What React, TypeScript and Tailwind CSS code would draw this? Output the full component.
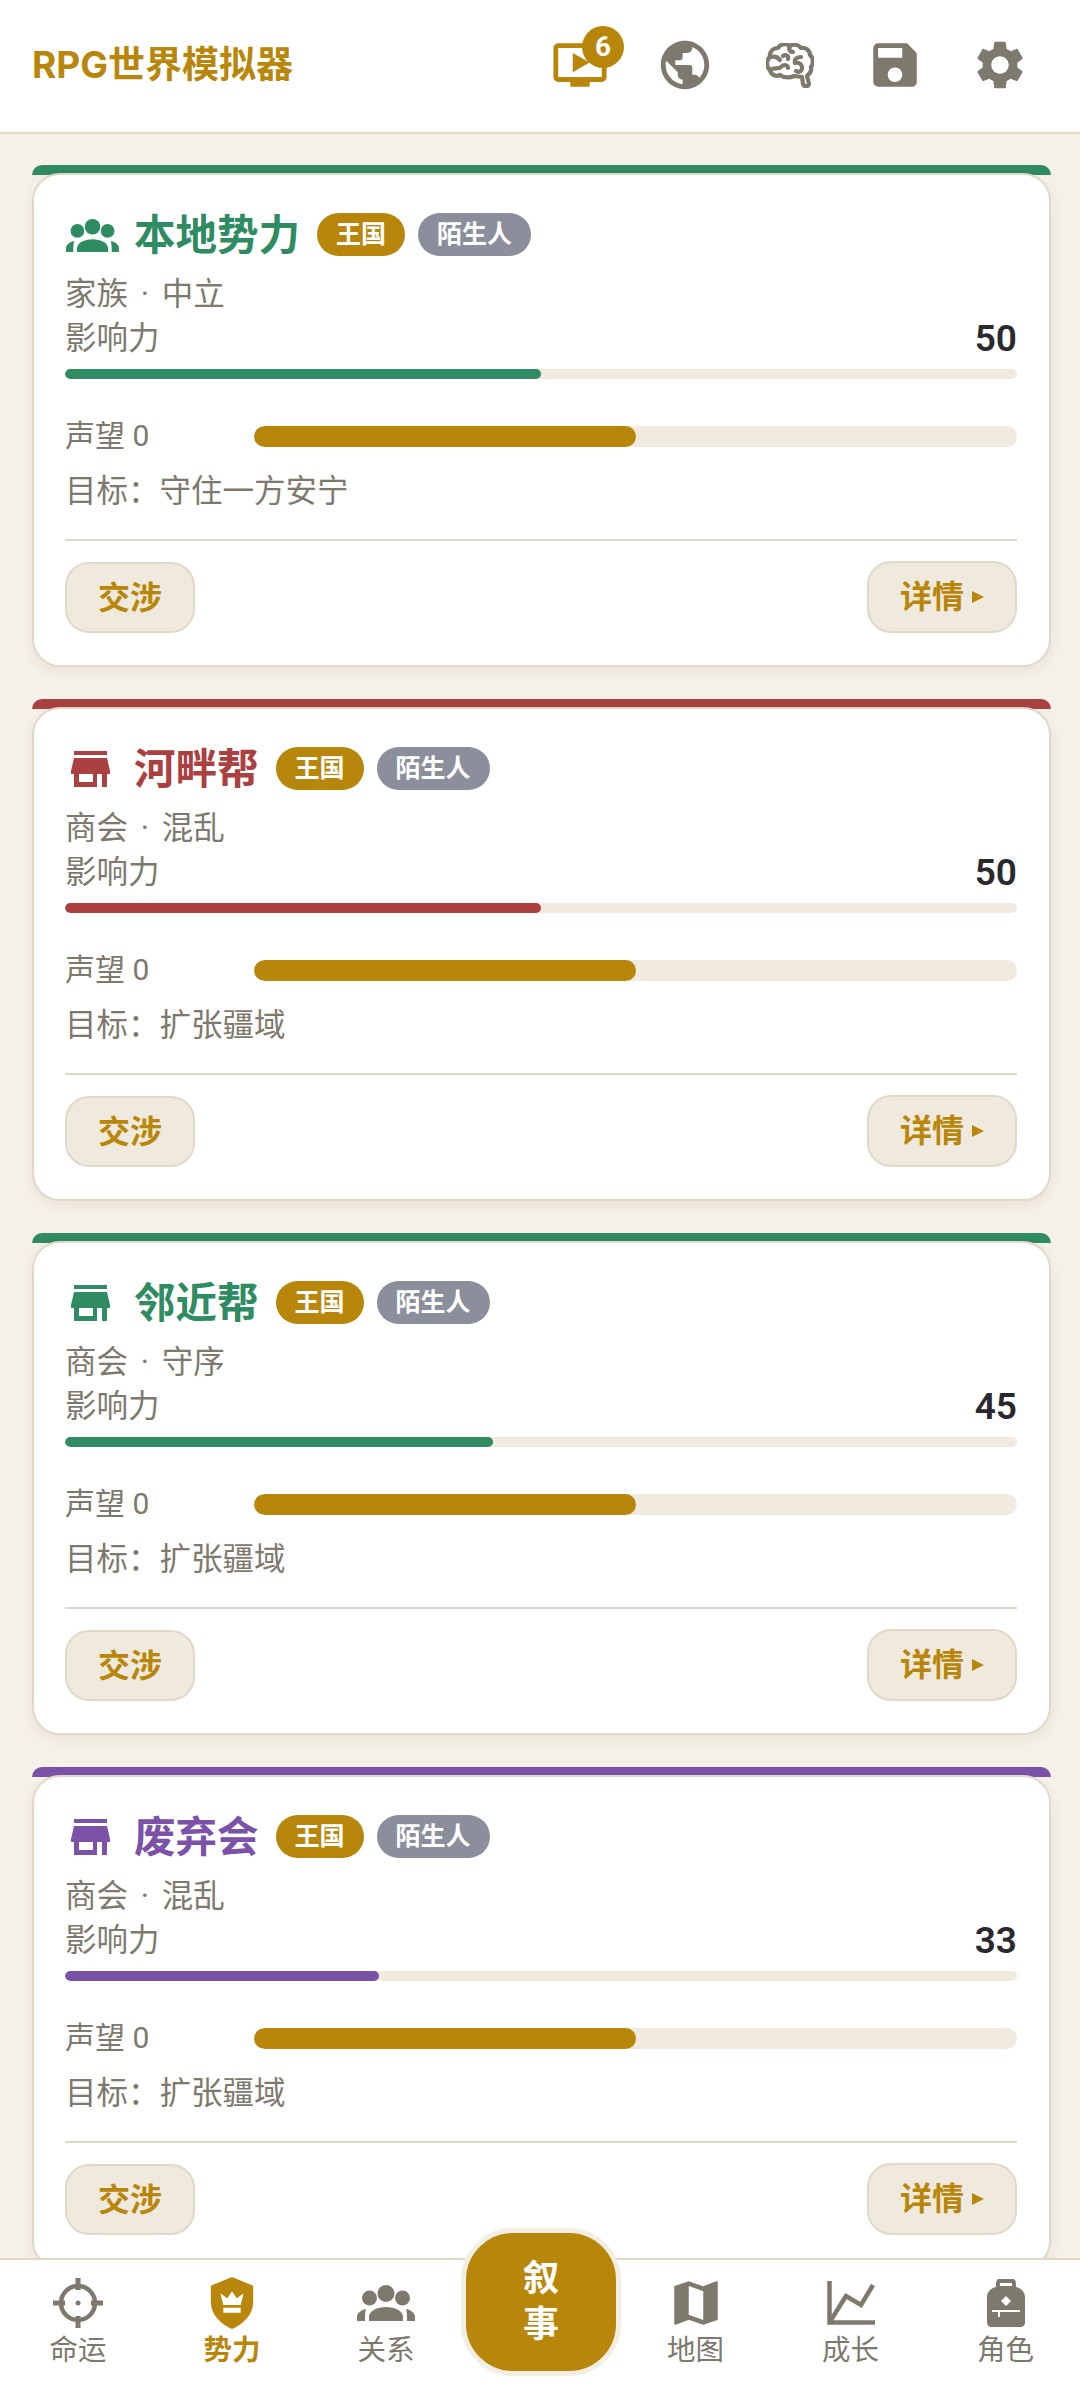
import React from "react";
import { MdMap, MdOutlineOndemandVideo, MdPublic, MdSave, MdSettings } from "react-icons/md";

const FONT = 'Roboto, "Noto Sans CJK SC", sans-serif';
const cards = [
  { name: "本地势力", color: "#2e8b62", icon: "g", sub: "家族 · 中立", inf: 50, goal: "守住一方安宁" },
  { name: "河畔帮", color: "#ab4040", icon: "s", sub: "商会 · 混乱", inf: 50, goal: "扩张疆域" },
  { name: "邻近帮", color: "#2e8b62", icon: "s", sub: "商会 · 守序", inf: 45, goal: "扩张疆域" },
  { name: "废弃会", color: "#7b52a8", icon: "s", sub: "商会 · 混乱", inf: 33, goal: "扩张疆域" },
];

const Groups = ({ w, h }: { w: number; h: number }) => (
  <svg width={w} height={h} viewBox="0 0 58 36" fill="currentColor">
    <circle cx="29" cy="8.5" r="8.5" />
    <circle cx="12.5" cy="13" r="7.5" />
    <circle cx="45.5" cy="13" r="7.5" />
    <path d="M12 36V32C12 26 20 22 29 22S46 26 46 32V36Z" />
    <path d="M0 36V32C0 28 4 25 9 24C8 27 8 31 8 36Z" />
    <path d="M58 36V32C58 28 54 25 49 24C50 27 50 31 50 36Z" />
  </svg>
);

const Store = () => (
  <svg width="39" height="36" viewBox="0 0 39 36" fill="currentColor">
    <path d="M3 0H36V4H3Z" />
    <path d="M3 7H36L39 20V23H0V20Z" />
    <path d="M3 23H8V31H22V23H26V36H3Z" />
    <path d="M31 23H36V36H31Z" />
  </svg>
);

function FactionCard({ c }: { c: (typeof cards)[number] }) {
  return (
    <div className="relative shrink-0 pt-[8px]">
      <div className="absolute left-0 right-0 top-0 h-[10px] rounded-t-[10px]" style={{ backgroundColor: c.color }} />
      <div className="relative h-[494px] rounded-[28px] border-2 border-[#e0d9c8] bg-white pl-[31px] pr-[32px] pt-[36px] shadow-[0_4px_12px_rgba(90,70,30,0.08)]">
        <div className="flex h-[46px] items-center">
          <span className="flex w-[54px] justify-center" style={{ color: c.color }}>
            {c.icon === "g" ? <span className="mt-[3px]"><Groups w={53} h={33} /></span> : <span className="mr-[4px] mt-[1px]"><Store /></span>}
          </span>
          <span className="ml-[15px] pt-[3px] text-[41.5px] leading-none font-bold" style={{ color: c.color }}>{c.name}</span>
          <span className="ml-[17px] flex h-[43px] items-center rounded-full bg-[#b8860b] px-[19px] pt-[1px] text-[25px] font-bold text-white">王国</span>
          <span className="ml-[13px] flex h-[43px] items-center rounded-full bg-[#8b8f9c] px-[19px] pt-[1px] text-[25px] font-bold text-white">陌生人</span>
        </div>
        <div className="mt-[16px] h-[43px] text-[31.5px] leading-[43px] text-[#7d7a6d] [word-spacing:5px]">{c.sub}</div>
        <div className="mt-[1px] flex h-[43px] items-center justify-between text-[31.5px] leading-[43px] text-[#7d7a6d]">
          <span>影响力</span>
          <span className="text-[37px] font-semibold text-[#2a2a2e]">{c.inf}</span>
        </div>
        <div className="mt-[9px] h-[10px] overflow-hidden rounded-full bg-[#f0eadf]">
          <div className="h-full rounded-full" style={{ width: `${c.inf}%`, backgroundColor: c.color }} />
        </div>
        <div className="mt-[46px] flex h-[22px] items-center">
          <span className="w-[189px] text-[30px] leading-none text-[#7d7a6d]">声望 0</span>
          <div className="h-[21px] flex-1 overflow-hidden rounded-full bg-[#f0eadf]">
            <div className="h-full w-1/2 rounded-full bg-[#b8860b]" />
          </div>
        </div>
        <div className="mt-[23px] h-[43px] text-[31.5px] leading-[43px] text-[#7d7a6d]">目标：{c.goal}</div>
        <div className="mt-[26px] h-[2px] bg-[#dfd9c9]" />
        <div className="mt-[20px] flex items-end justify-between">
          <button className="h-[71px] w-[130px] rounded-[24px] border-2 border-[#e0d9c8] bg-[#f0e9dd] text-[32px] font-bold text-[#b8860b]">交涉</button>
          <button className="flex h-[72px] w-[150px] items-center justify-center gap-[8px] rounded-[24px] border-2 border-[#e0d9c8] bg-[#f0e9dd] text-[32px] font-bold text-[#b8860b]">
            详情
            <svg width="12" height="14" viewBox="0 0 12 14"><path d="M0 1 L12 7 L0 13 Z" fill="#b8860b" /></svg>
          </button>
        </div>
      </div>
    </div>
  );
}

const Crosshair = () => (
  <svg width="50" height="50" viewBox="0 0 50 50" fill="none" stroke="#7d7a6d">
    <circle cx="25" cy="25" r="17" strokeWidth="4.5" />
    <path d="M25 0v12M25 38v12M0 25h12M38 25h12" strokeWidth="5" />
    <circle cx="25" cy="25" r="2.5" fill="#7d7a6d" stroke="none" />
  </svg>
);
const Shield = () => (
  <svg width="44" height="52" viewBox="0 0 44 54">
    <path d="M22 0 L44 9 V26 C44 39 34 49 22 54 C10 49 0 39 0 26 V9 Z" fill="#b8860b" />
    <path d="M10 17 L17 22 L22 15 L27 22 L34 17 L31 29 H13 Z M13 32 H31 V37 H13 Z" fill="#fff" />
  </svg>
);
const Chart = () => (
  <svg width="48" height="44" viewBox="0 0 48 44" fill="none" stroke="#7d7a6d" strokeWidth="4.5">
    <path d="M2.5 0V41.5H48" />
    <path d="M4 39 L19 15 L34 24 L46 4" />
  </svg>
);
const Backpack = () => (
  <svg width="38" height="48" viewBox="0 0 38 48" fill="#7d7a6d">
    <path fillRule="evenodd" d="M12 0H26C28 0 29 2 29 5V8C34 9 38 13 38 18V44C38 46 36 48 34 48H4C2 48 0 46 0 44V18C0 13 4 9 9 8V5C9 2 10 0 12 0ZM13 4V7H25V4Z" />
    <path d="M19 17L24 22L19 27L14 22Z" fill="#fff" />
    <path d="M5 31H33V33H13V38H11V33H5Z" fill="#fff" />
  </svg>
);
const Brain = () => (
  <span className="flex w-[58px] justify-center">
    <svg width="48" height="45" viewBox="0 0 48 45" fill="none" stroke="#7d7a6d" strokeWidth="4.2" strokeLinecap="round" strokeLinejoin="round">
      <path d="M24 3C20 0 14 1 12 5C7 5 3 9 4 14C0 17 0 24 4 27C5 32 10 34 14 32C18 35 24 35 28 33L36 34L37 41C38 44 42 44 43 41L41 33C44 30 46 28 45 24C48 20 47 14 44 12C44 7 39 4 35 5C32 1 27 1 24 3Z" />
      <path d="M24 3C22 6 24 9 27 9M4 14C8 13 12 14 14 17M6 26C10 25 13 26 15 24C18 21 22 22 22 25M35 14C31 14 28 16 29 20C33 19 36 21 36 25C36 28 33 30 30 28M17 13C20 11 23 13 22 16" />
    </svg>
  </span>
);

function NavItem({ label, icon, active, wide }: { label: string; icon: React.ReactNode; active?: boolean; wide?: boolean }) {
  return (
    <div className={`flex shrink-0 flex-col items-center ${wide ? "w-[155px]" : "w-[154px]"} ${active ? "text-[#b8860b] font-bold" : "text-[#7d7a6d]"}`}>
      <div className="flex h-[58px] items-center justify-center">{icon}</div>
      <span className="-mt-[1px] text-[28.5px] leading-[40px]">{label}</span>
    </div>
  );
}

export default function App() {
  return (
    <div className="flex h-[2400px] w-[1080px] flex-col overflow-hidden bg-[#f5f0e8]" style={{ fontFamily: FONT }}>
      <header className="flex h-[134px] shrink-0 items-center justify-between border-b-2 border-[#e0d9c8] bg-white pb-[2px] pl-[32px] pr-[51px]">
        <span className="text-[37px] font-bold text-[#b8860b]" style={{ fontFamily: '"Inter", "Noto Sans CJK SC", sans-serif' }}>RPG世界模拟器</span>
        <div className="flex items-center gap-[47px]">
          <div className="relative">
            <MdOutlineOndemandVideo size={58} color="#b8860b" />
            <span className="absolute -right-[15px] -top-[10px] flex h-[42px] w-[42px] items-center justify-center rounded-full bg-[#b8860b] text-[28px] font-bold text-white">6</span>
          </div>
          <MdPublic size={58} color="#7d7a6d" />
          <Brain />
          <MdSave size={58} color="#7d7a6d" />
          <MdSettings size={58} color="#7d7a6d" />
        </div>
      </header>
      <main className="flex min-h-0 flex-1 flex-col gap-[32px] overflow-hidden pl-[32px] pr-[29px] pt-[31px]">
        {cards.map((c) => <FactionCard key={c.name} c={c} />)}
      </main>
      <nav className="relative flex h-[142px] shrink-0 items-start border-t-2 border-[#e0d9c8] bg-white pl-[1px] pt-[14px]">
        <NavItem label="命运" icon={<Crosshair />} />
        <NavItem active label="势力" icon={<Shield />} />
        <NavItem label="关系" icon={<Groups w={58} h={36} />} />
        <div className="w-[155px] shrink-0" />
        <NavItem wide label="地图" icon={<MdMap size={58} />} />
        <NavItem wide label="成长" icon={<Chart />} />
        <NavItem wide label="角色" icon={<Backpack />} />
        <div className="absolute left-[461px] top-[-32px] flex h-[148px] w-[160px] items-center justify-center rounded-[52px] border-[5px] border-[#f3eee3] bg-[#b8860b] text-center text-[36px] leading-[46px] font-bold text-white">叙<br />事</div>
      </nav>
    </div>
  );
}
